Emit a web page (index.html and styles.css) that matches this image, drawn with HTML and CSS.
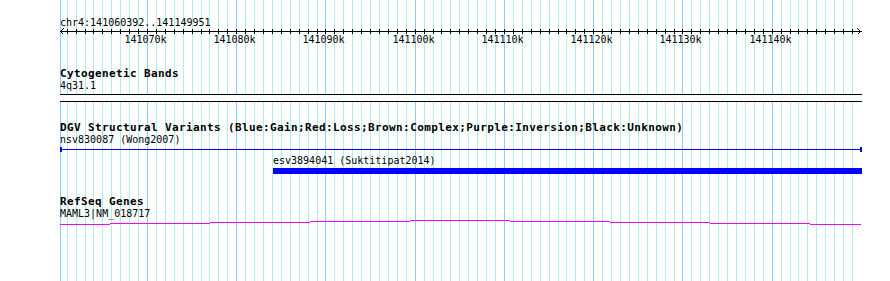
FILE: index.html
```html
<!DOCTYPE html>
<html lang="en">
<head>
    <meta charset="UTF-8">
    <meta name="viewport" content="width=device-width, initial-scale=1.0">
    <title>chr4:141060392..141149951</title>
    <link rel="stylesheet" href="styles.css">
</head>
<body>

<div class="panel">
    <svg class="grid" id="grid" width="890" height="281"></svg>

    <div class="track ruler">
        <div class="landmark">chr4:141060392..141149951</div>
        <svg class="scale" id="scale" width="802" height="16"></svg>
    </div>

    <div class="track cytoband">
        <div class="track-title">Cytogenetic Bands</div>
        <div class="feature-label">4q31.1</div>
        <div class="band"></div>
    </div>

    <div class="track dgv">
        <div class="track-title">DGV Structural Variants (Blue:Gain;Red:Loss;Brown:Complex;Purple:Inversion;Black:Unknown)</div>
        <div class="feature-label">nsv830087 (Wong2007)</div>
        <div class="variant-line"></div>
        <div class="feature-label esv-label" style="margin-left: 213px">esv3894041 (Suktitipat2014)</div>
        <div class="variant-bar" style="margin-left: 213px; width: 589px"></div>
    </div>

    <div class="track refseq">
        <div class="track-title">RefSeq Genes</div>
        <div class="feature-label">MAML3|NM_018717</div>
        <svg class="gene" width="802" height="5">
            <rect x="0" y="4" width="50" height="1"></rect>
            <rect x="50" y="3" width="100" height="1"></rect>
            <rect x="150" y="2" width="100" height="1"></rect>
            <rect x="250" y="1" width="100" height="1"></rect>
            <rect x="350" y="0" width="100" height="1"></rect>
            <rect x="450" y="1" width="100" height="1"></rect>
            <rect x="550" y="2" width="100" height="1"></rect>
            <rect x="650" y="3" width="100" height="1"></rect>
            <rect x="750" y="4" width="51" height="1"></rect>
        </svg>
    </div>
</div>

<script>
    document.addEventListener("DOMContentLoaded", function() {
        const SVGNS = 'http://www.w3.org/2000/svg';
        const START = 141060392;
        const END = 141149951;
        const LEFT = 60;
        const pxPerBp = 0.008924;
        const originX = 147 - (141070000 - START) * pxPerBp;

        const grid = document.getElementById('grid');
        const scale = document.getElementById('scale');

        function bpToX(bp) {
            return Math.round(originX + (bp - START) * pxPerBp);
        }

        function rect(parent, x, y, w, h, cls) {
            const r = document.createElementNS(SVGNS, 'rect');
            r.setAttribute('x', x);
            r.setAttribute('y', y);
            r.setAttribute('width', w);
            r.setAttribute('height', h);
            r.setAttribute('class', cls);
            parent.appendChild(r);
        }

        // left edge of the panel
        rect(grid, LEFT, 0, 1, 281, 'major');

        // ruler line and arrow heads
        rect(scale, 0, 3, 802, 1, 'axis');
        const arrows = document.createElementNS(SVGNS, 'path');
        arrows.setAttribute('d', 'M3.5 0.5 L0.5 3.5 L3.5 6.5 M797.5 0.5 L800.5 3.5 L797.5 6.5');
        arrows.setAttribute('class', 'arrow');
        scale.appendChild(arrows);

        // one grid line and tick per kb, labelled every 10 kb
        for (let kb = Math.ceil(START / 1000); kb * 1000 <= END; kb++) {
            const x = bpToX(kb * 1000);
            const major = kb % 10 === 0;
            rect(grid, x, 0, 1, 281, major ? 'major' : 'minor');
            rect(scale, x - LEFT, 1, 1, 5, 'axis');

            if (major) {
                const label = document.createElementNS(SVGNS, 'text');
                label.setAttribute('x', x - LEFT - 1.5);
                label.setAttribute('y', 15);
                label.setAttribute('text-anchor', 'middle');
                label.textContent = kb + 'k';
                scale.appendChild(label);
            }
        }
    });
</script>

</body>
</html>
```

FILE: styles.css
```css
body {
    margin: 0;
    background-color: #ffffff;
    font-family: "DejaVu Sans Mono", "Liberation Mono", monospace;
    color: #000000;
}

.panel {
    position: relative;
    width: 890px;
    height: 281px;
    overflow: hidden;
}

.grid {
    position: absolute;
    top: 0;
    left: 0;
}

.grid .minor {
    fill: #afeeee;
}

.grid .major {
    fill: #87cefa;
}

.track {
    position: relative;
    padding-left: 60px;
}

.track-title {
    font-size: 11px;
    font-weight: bold;
    letter-spacing: 0.38px;
    line-height: 10px;
    white-space: nowrap;
}

.feature-label {
    font-size: 10px;
    line-height: 13px;
    white-space: nowrap;
}

/* ruler */

.ruler {
    padding-top: 17px;
}

.landmark {
    font-size: 10px;
    line-height: 11px;
}

.scale {
    display: block;
    overflow: visible;
}

.scale .axis {
    fill: #000000;
}

.scale .arrow {
    fill: none;
    stroke: #000000;
    stroke-width: 1;
    shape-rendering: crispEdges;
}

.scale text {
    font-family: "DejaVu Sans Mono", "Liberation Mono", monospace;
    font-size: 10px;
    fill: #000000;
}

/* cytogenetic bands */

.cytoband {
    margin-top: 25px;
}

.band {
    width: 802px;
    height: 6px;
    margin-top: 2px;
    background-color: #ffffff;
    border-top: 1px solid #000000;
    border-bottom: 1px solid #000000;
}

/* structural variants */

.dgv {
    margin-top: 21px;
}

.variant-line {
    box-sizing: border-box;
    width: 802px;
    height: 5px;
    margin-top: 1px;
    border-left: 2px solid #0000ff;
    border-right: 2px solid #0000ff;
    background: linear-gradient(#0000ff, #0000ff) center / 100% 1px no-repeat;
}

.esv-label {
    margin-top: 2px;
}

.variant-bar {
    height: 6px;
    margin-top: 1px;
    background-color: #0000ff;
}

/* refseq genes */

.refseq {
    margin-top: 23px;
}

.gene {
    display: block;
}

.gene rect {
    fill: #ff00ff;
}
```
